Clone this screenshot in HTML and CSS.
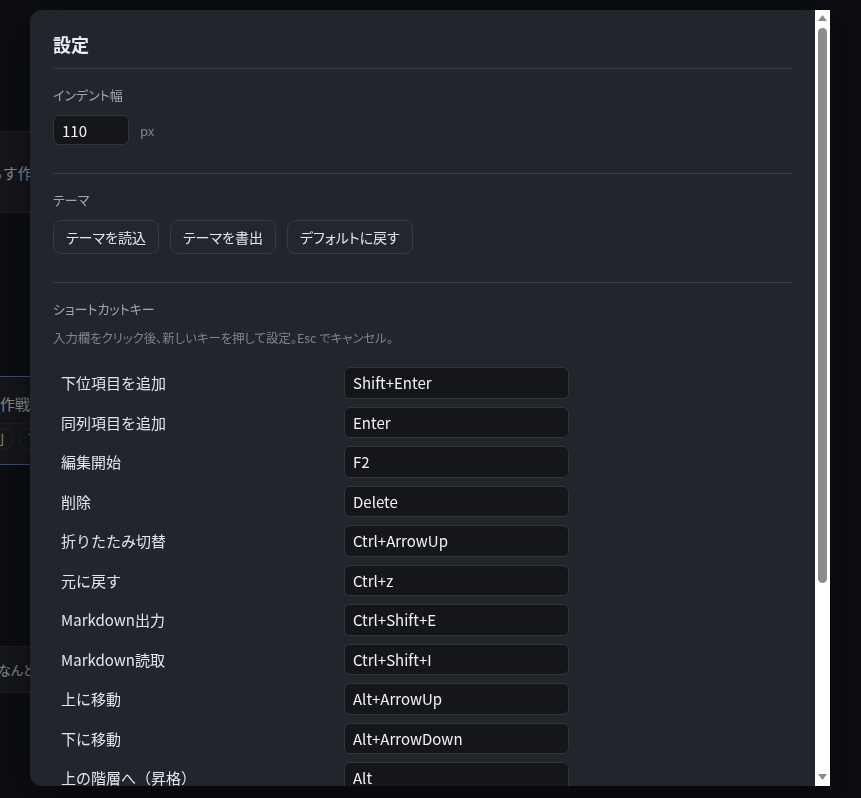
FILE: index.html
```html
<!DOCTYPE html>
<html lang="ja">
<head>
<meta charset="utf-8">
<title>設定</title>
<link rel="stylesheet" href="styles.css">
</head>
<body>
  <!-- mind map canvas behind the dialog -->
  <div class="canvas">
    <div class="node node-a">減らす作業の一覧</div>
    <div class="node node-b">
      <div class="node-title">作戦会議のまとめ</div>
      <div class="node-tags"><span class="chip">同列</span><span class="chip">下位</span></div>
    </div>
    <div class="node node-c">なんとなくのメモ</div>
  </div>

  <div class="overlay">
    <div class="modal">
      <div class="modal-body">
        <h2 class="modal-title">設定</h2>

        <section class="section">
          <div class="section-label">インデント幅</div>
          <div class="indent-row">
            <input class="field field-num" type="text" value="110">
            <span class="unit">px</span>
          </div>
        </section>

        <section class="section">
          <div class="section-label">テーマ</div>
          <div class="btn-row">
            <button class="btn">テーマを読込</button>
            <button class="btn">テーマを書出</button>
            <button class="btn">デフォルトに戻す</button>
          </div>
        </section>

        <section class="section">
          <div class="section-label">ショートカットキー</div>
          <p class="hint">入力欄をクリック後、新しいキーを押して設定。Esc でキャンセル。</p>
          <div class="keys">
            <div class="key-name">下位項目を追加</div><input class="field key" type="text" value="Shift+Enter" readonly>
            <div class="key-name">同列項目を追加</div><input class="field key" type="text" value="Enter" readonly>
            <div class="key-name">編集開始</div><input class="field key" type="text" value="F2" readonly>
            <div class="key-name">削除</div><input class="field key" type="text" value="Delete" readonly>
            <div class="key-name">折りたたみ切替</div><input class="field key" type="text" value="Ctrl+ArrowUp" readonly>
            <div class="key-name">元に戻す</div><input class="field key" type="text" value="Ctrl+z" readonly>
            <div class="key-name">Markdown出力</div><input class="field key" type="text" value="Ctrl+Shift+E" readonly>
            <div class="key-name">Markdown読取</div><input class="field key" type="text" value="Ctrl+Shift+I" readonly>
            <div class="key-name">上に移動</div><input class="field key" type="text" value="Alt+ArrowUp" readonly>
            <div class="key-name">下に移動</div><input class="field key" type="text" value="Alt+ArrowDown" readonly>
            <div class="key-name">上の階層へ（昇格）</div><input class="field key" type="text" value="Alt" readonly>
            <div class="key-name">下の階層へ（降格）</div><input class="field key" type="text" value="Tab" readonly>
            <div class="key-name">すべて展開</div><input class="field key" type="text" value="Ctrl+ArrowDown" readonly>
          </div>
        </section>
      </div>

      <!-- vertical scrollbar of the dialog body -->
      <div class="scrollbar" aria-hidden="true">
        <svg class="sb-arrow" width="15" height="17" viewBox="0 0 15 17"><path d="M7.5 5 L12 11 H3 Z" fill="#8a8a8a"/></svg>
        <div class="sb-track"><div class="sb-thumb"></div></div>
        <svg class="sb-arrow" width="15" height="17" viewBox="0 0 15 17"><path d="M3 5 H12 L7.5 11 Z" fill="#8a8a8a"/></svg>
      </div>
    </div>
  </div>
</body>
</html>
```

FILE: styles.css
```css
* {
  box-sizing: border-box;
}

html, body {
  margin: 0;
  height: 100%;
}

body {
  background: #15171e;
  font-family: "Noto Sans CJK JP", "Noto Sans", sans-serif;
  color: #e4e6ea;
  overflow: hidden;
}

/* ---------- canvas with nodes ---------- */
.canvas {
  position: relative;
  height: 100%;
}

.node {
  position: absolute;
  background: #24262d;
  border: 1px solid #30333b;
  border-radius: 8px;
  color: #e4e6ee;
  font-size: 15px;
  line-height: 22px;
  white-space: nowrap;
}

.node-a {
  left: -40px;
  top: 131px;
  width: 260px;
  height: 82px;
  padding: 30px 12px;
}

.node-b {
  left: -70px;
  top: 376px;
  width: 300px;
  height: 89px;
  border: 1px solid #6b84c0;
  padding: 16px 12px 0 12px;
}

.node-title {
  padding: 0 0 8px 57px;
  border-bottom: 1px solid #34363e;
}

.node-tags {
  display: flex;
  gap: 6px;
  padding: 4px 0 0 26px;
}

.chip {
  font-size: 13px;
  line-height: 20px;
  padding: 0 8px;
  border: 1px solid #3c3f48;
  border-radius: 10px;
}

.node-c {
  left: -40px;
  top: 646px;
  width: 260px;
  height: 47px;
  padding: 12px 12px 0 37px;
  font-size: 13px;
  font-feature-settings: "palt";
}

/* ---------- dialog ---------- */
.overlay {
  position: fixed;
  inset: 0;
  padding: 0 1px 2px 0;
  background: rgba(0, 0, 0, 0.4);
  display: flex;
  align-items: center;
  justify-content: center;
}

.modal {
  display: flex;
  width: 800px;
  height: 776px;
  box-shadow: 0 10px 40px rgba(0, 0, 0, 0.5);
  border-radius: 12px 0 0 12px;
}

.modal-body {
  flex: 1;
  min-width: 0;
  overflow: hidden;
  background: #22252c;
  border-radius: 12px 0 0 12px;
  padding: 21px 22px 22px 23px;
}

/* light classic scrollbar */
.scrollbar {
  width: 15px;
  flex: none;
  display: flex;
  flex-direction: column;
  background: #ffffff;
}

.sb-arrow {
  display: block;
  flex: none;
}

.sb-track {
  flex: 1;
  padding: 1px 3px 186px;
}

.sb-thumb {
  height: 100%;
  background: #8c8c8c;
  border-radius: 5px;
}

.modal-title {
  margin: 0;
  font-size: 18px;
  line-height: 27px;
  font-weight: 700;
  color: #eceef2;
  padding-bottom: 10px;
  border-bottom: 1px solid #393c44;
}

.section {
  padding: 16px 0 28px;
  border-bottom: 1px solid #393c44;
}

.section-label {
  font-size: 13px;
  line-height: 20px;
  color: #a0a5ae;
  font-feature-settings: "palt";
}

.indent-row {
  display: flex;
  align-items: center;
  gap: 11px;
  margin-top: 10px;
}

.field {
  background: #15161a;
  border: 1px solid #32353c;
  border-radius: 6px;
  color: #f1f3f6;
  font-family: inherit;
  font-size: 15px;
  outline: none;
}

.field-num {
  width: 76px;
  height: 30px;
  padding: 0 8px;
}

.unit {
  font-size: 13px;
  color: #7f8590;
}

.btn-row {
  display: flex;
  gap: 11px;
  margin-top: 10px;
}

.btn {
  height: 34px;
  padding: 0 12px;
  background: #23262d;
  border: 1px solid #373a43;
  border-radius: 8px;
  color: #e4e6ea;
  font-family: inherit;
  font-size: 14px;
  font-feature-settings: "palt";
}

.hint {
  margin: 10px 0 0;
  font-size: 12.4px;
  line-height: 18px;
  color: #7f8590;
  font-feature-settings: "palt";
}

.keys {
  display: grid;
  grid-template-columns: 291px 225px;
  row-gap: 8px;
  align-items: center;
  margin-top: 20px;
}

.key-name {
  padding-left: 8px;
  font-size: 15px;
  color: #e4e6ea;
}

.key {
  height: 31.5px;
  padding: 0 8px;
}
```
